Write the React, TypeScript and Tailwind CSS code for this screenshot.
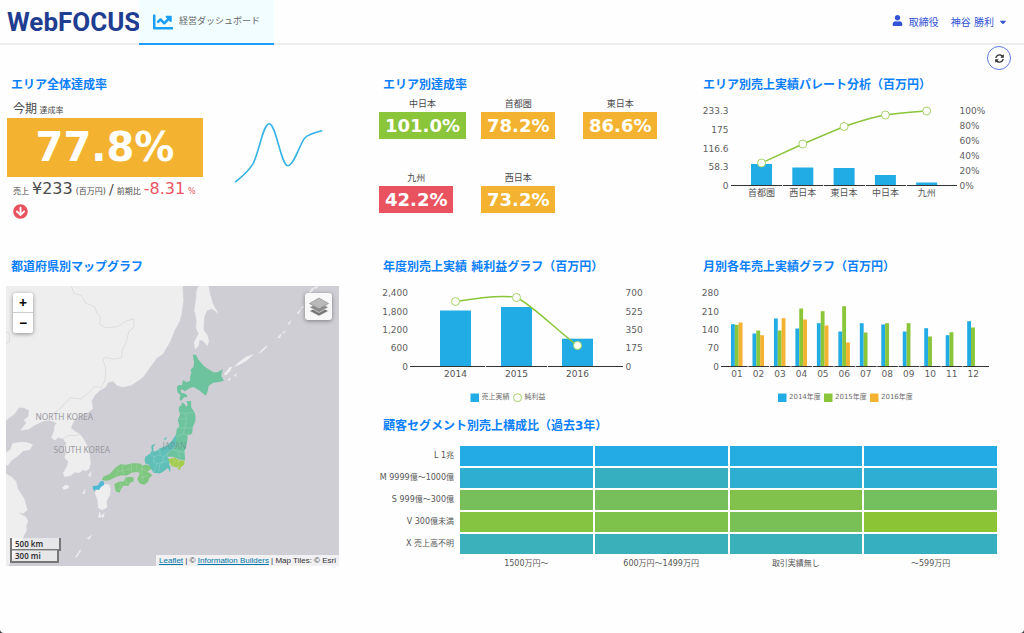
import React from "react";
import { FaArrowCircleDown, FaCaretDown, FaChartLine, FaSyncAlt, FaUser } from "react-icons/fa";

const BLUE = "#22ace5";
const GREEN = "#8bc53a";
const ORANGE = "#f3b331";

function Title({ children }: { children: React.ReactNode }) {
  return <h2 className="pl-[11px] text-xs leading-5 font-bold text-[#0b80fb]">{children}</h2>;
}

function Header() {
  return (
    <header className="flex h-[45px] items-start border-b-2 border-[#ededef]">
      <a href="#home" className="w-[139px] pl-[7px] font-[Roboto,sans-serif] text-[26px] leading-[44px] font-bold text-[#1f3d91]">
        WebFOCUS
      </a>
      <nav>
        <a
          href="#dashboard"
          className="flex h-[45px] w-[135px] items-center gap-[6px] border-b-2 border-[#1c9ff5] bg-[#f1fdff] pl-[14px] text-[9px] whitespace-nowrap text-[#666]"
        >
          <FaChartLine className="size-[20px] text-[#1c9ff9]" />
          経営ダッシュボード
        </a>
      </nav>
      <button type="button" className="mr-4 ml-auto flex h-[44px] items-center text-[10px] text-[#3353d4]">
        <FaUser className="mr-[6px] mb-1 size-[11px]" />
        <span>取締役</span>
        <span className="ml-3">神谷 勝利</span>
        <FaCaretDown className="ml-1 size-[10px]" />
      </button>
    </header>
  );
}

function AreaTotal() {
  return (
    <section>
      <Title>エリア全体達成率</Title>
      <div className="flex pl-[7px]">
        <div className="w-[196px] shrink-0">
          <p className="pt-[7px] pl-[6px] text-[8px] leading-[15px]">
            <span className="text-xs leading-[15px]">今期</span> 達成率
          </p>
          <p className="bg-[#f3b331] text-center text-[40px] leading-[59px] font-bold text-white">77.8%</p>
          <p className="flex items-baseline gap-[3px] pl-[6px] text-[8px] leading-6 whitespace-nowrap">
            <span>売上</span>
            <span className="text-base leading-6">¥233</span>
            <span>(百万円)</span>
            <span className="text-sm">/</span>
            <span>前期比</span>
            <span className="text-base leading-6 text-[#e9565f]">-8.31</span>
            <span className="text-[#e9565f]">%</span>
          </p>
          <FaArrowCircleDown className="ml-[6px] size-[15px] text-[#e9535f]" />
        </div>
        <svg viewBox="0 0 120 100" className="mt-[6px] ml-5 h-[100px] w-[120px]" fill="none">
          <path
            d="M12.7 80.7C19 75.5 25 71 30.3 62.3C37 48 40 23 46.3 22.7C53 23 58 64 64.7 64.7C71 65 77 42 82 36.7C85 33.500 90 32 98.700 29.700"
            stroke="#35b2e6"
            strokeWidth="1.600"
            strokeLinecap="round"
          />
        </svg>
      </div>
    </section>
  );
}

const areas = [
  { name: "中日本", value: "101.0%", tone: "bg-[#8bc53a]" },
  { name: "首都圏", value: "78.2%", tone: "bg-[#f3b331]" },
  { name: "東日本", value: "86.6%", tone: "bg-[#f3b331]" },
  { name: "九州", value: "42.2%", tone: "bg-[#e9535f]" },
  { name: "西日本", value: "73.2%", tone: "bg-[#f3b331]" },
];

function AreaRates() {
  return (
    <section>
      <Title>エリア別達成率</Title>
      <ul className="grid grid-cols-[repeat(3,102px)] gap-y-8 pt-[2px] pl-[7px]">
        {areas.map((a) => (
          <li key={a.name} className="w-max text-center">
            <p className="text-[9px] leading-[15px]">{a.name}</p>
            <p className={"px-[6px] text-lg leading-[27px] font-bold text-white " + a.tone}>{a.value}</p>
          </li>
        ))}
      </ul>
    </section>
  );
}

function Axis({ x1, x2, y, ticks }: { x1: number; x2: number; y: number; ticks: number[] }) {
  return (
    <g>
      <line x1={x1} x2={x2} y1={y} y2={y} stroke="#333" />
      {ticks.map((t) => (
        <rect key={t} x={t - 0.5} y={y - 1} width="1" height="2" fill="#fff" fillOpacity=".8" />
      ))}
    </g>
  );
}

function Labels({ x, anchor, items }: { x: number; anchor: "start" | "end"; items: [string, number][] }) {
  return (
    <g fontSize="9" fill="#5e5e5e" textAnchor={anchor}>
      {items.map(([t, y]) => (
        <text key={t} x={x} y={y + 3}>
          {t}
        </text>
      ))}
    </g>
  );
}

const pareto = [
  { name: "首都圏", bar: 21.5, line: 68 },
  { name: "西日本", bar: 18, line: 49 },
  { name: "東日本", bar: 17.5, line: 31.5 },
  { name: "中日本", bar: 10.5, line: 20 },
  { name: "九州", bar: 3, line: 16 },
];

function ParetoChart() {
  const cx = (i: number) => 69.5 + i * 41.3;
  return (
    <section>
      <Title>エリア別売上実績パレート分析（百万円）</Title>
      <svg viewBox="0 0 332 106" className="w-full" role="img" aria-label="エリア別売上実績パレート分析">
        <Labels x={36.5} anchor="end" items={[["233.3", 16], ["175", 35], ["116.6", 53.5], ["58.3", 72], ["0", 90.5]]} />
        <Labels x={267.5} anchor="start" items={[["100%", 16], ["80%", 30.5], ["60%", 46], ["40%", 61], ["20%", 76], ["0%", 90.5]]} />
        {pareto.map((p, i) => (
          <rect key={p.name} x={cx(i) - 10.5} y={90.5 - p.bar} width="21" height={p.bar} fill={BLUE} />
        ))}
        <Axis x1={39} x2={265} y={90.5} ticks={[90.5, 131.5, 173.5, 214.5]} />
        <path d="M69.5 68L110.800 49L152.100 31.500C166 27 180 22 193.400 20C207 18 221 17 234.700 16" fill="none" stroke={GREEN} strokeWidth="1.500" />
        {pareto.map((p, i) => (
          <g key={p.name}>
            <circle cx={cx(i)} cy={p.line} r="4" fill="#fff" stroke="#a5d267" />
            <text x={cx(i)} y="100.500" textAnchor="middle" fontSize="9" fill="#555">
              {p.name}
            </text>
          </g>
        ))}
      </svg>
    </section>
  );
}

const years = [
  { name: "2014", bar: 56, line: 24.5 },
  { name: "2015", bar: 59.5, line: 20.5 },
  { name: "2016", bar: 27.8, line: 68.5 },
];

function YearlyChart() {
  const cx = (i: number) => 83.5 + i * 61;
  return (
    <section>
      <Title>年度別売上実績 純利益グラフ（百万円）</Title>
      <svg viewBox="0 0 320 139" className="w-full" role="img" aria-label="年度別売上実績 純利益グラフ">
        <Labels x={36} anchor="end" items={[["2,400", 16], ["1,800", 34.5], ["1,200", 53], ["600", 71], ["0", 89.5]]} />
        <Labels x={253.5} anchor="start" items={[["700", 16], ["525", 34.5], ["350", 53], ["175", 71], ["0", 89.5]]} />
        {years.map((p, i) => (
          <rect key={p.name} x={cx(i) - 15.5} y={89.5 - p.bar} width="31" height={p.bar} fill={BLUE} />
        ))}
        <Axis x1={38} x2={251} y={89.5} ticks={[113.5, 175.5]} />
        <path d="M83.5 24.500C104 21 130 17.500 144.500 20.500C159 27 188 56 205.500 68.500" fill="none" stroke={GREEN} strokeWidth="1.500" />
        {years.map((p, i) => (
          <g key={p.name}>
            <circle cx={cx(i)} cy={p.line} r="4" fill="#fff" stroke="#a5d267" />
            <text x={cx(i)} y="99.500" textAnchor="middle" fontSize="9" fill="#555">
              {p.name}
            </text>
          </g>
        ))}
        <g fontSize="7" fill="#6b6b6b">
          <rect x="98.500" y="116.500" width="8.500" height="8.500" fill={BLUE} />
          <text x="109.500" y="122">売上実績</text>
          <circle cx="145.500" cy="120.700" r="4" fill="#fff" stroke="#a5d267" />
          <text x="152.500" y="122">純利益</text>
        </g>
      </svg>
    </section>
  );
}

const months: number[][] = [
  [42.3, 41.7, 44], [33, 36, 31.3], [48, 36, 48.3], [38, 58, 47], [43.3, 55.3, 41], [35, 60.3, 24],
  [43.3, 34], [42, 43.3], [35, 43.3], [38.3, 30], [31.3, 34.3], [45.3, 39],
];
const seriesColors = [BLUE, GREEN, ORANGE];

function MonthlyChart() {
  const cx = (i: number) => 45 + i * 21.47;
  return (
    <section>
      <Title>月別各年売上実績グラフ（百万円）</Title>
      <svg viewBox="0 0 332 139" className="w-full" role="img" aria-label="月別各年売上実績グラフ">
        <Labels x={27} anchor="end" items={[["280", 16], ["210", 34.5], ["140", 53], ["70", 71], ["0", 89.5]]} />
        {months.map((values, i) =>
          values.map((v, s) => (
            <rect key={i + "-" + s} x={cx(i) - 6 + s * 3.85} y={89.5 - v} width="3.850" height={v} fill={seriesColors[s]} />
          )),
        )}
        <Axis x1={29} x2={297} y={89.5} ticks={months.slice(1).map((_, i) => cx(i) + 11)} />
        {months.map((_, i) => (
          <text key={i} x={cx(i)} y="99.500" textAnchor="middle" fontSize="9" fill="#5e5e5e">
            {String(i + 1).padStart(2, "0")}
          </text>
        ))}
        <g fontSize="7" fill="#6b6b6b">
          {["2014年度", "2015年度", "2016年度"].map((t, i) => (
            <g key={t}>
              <rect x={86 + i * 46} y="116.500" width="8.500" height="8.500" fill={seriesColors[i]} />
              <text x={97 + i * 46} y="122">{t}</text>
            </g>
          ))}
        </g>
      </svg>
    </section>
  );
}

function MapCard() {
  const zoomButton = "flex size-5 items-center justify-center bg-white text-sm leading-none font-bold text-black";
  return (
    <section className="row-span-2">
      <Title>都道府県別マップグラフ</Title>
      <div className="relative mt-[9px] mr-[33px] ml-[6px] font-['Noto_Sans',sans-serif]">
        <svg viewBox="18 16 1002 844" className="w-full" role="img" aria-label="都道府県別マップ">
          <rect x="18" y="16" width="1002" height="844" fill="#cfced4" />
          <g fill="#eeeeef" stroke="#f6f6f7" strokeWidth="1">
            <path d="M18 16H549L551 60L546 100L540 122L525 150L512 182L490 220L472 232L450 262L430 290L412 303L395 314L370 320L352 315L340 302L325 306L318 320L300 330L285 345L275 362L279 385L262 398L245 402L232 414L222 422L213 443L228 455L240 462L250 475L264 500L270 530L272 550L268 566L258 572L250 569L238 578L225 576L213 586L195 590L190 580L202 558L206 545L195 533L198 520L192 505L200 490L190 475L175 472L165 480L155 472L163 452L165 435L172 428L150 420L130 422L105 434L85 447L62 450L80 428L72 420L86 408L88 390L72 382L58 381L42 402L18 420Z" />
            <path d="M18 518L32 508L38 490L60 486L80 487L98 493L90 508L70 512L52 528L35 540L24 555L18 556Z" />
            <path d="M18 582L34 590L48 604L54 628L72 655L82 690L70 700L52 697L78 712L84 724L78 738L80 750L70 770L62 795L48 812L42 828L24 860H18Z" />
            <path d="M597 16H627L632 42L641 72L656 98L638 84L622 90L614 110L612 148L624 165L628 182L624 195L610 180L600 178L597 196L588 206L584 186L598 160L590 142L592 118L585 90L590 58L592 30Z" />
            <path d="M302 624L314 612L328 614L332 628L330 646L320 664L322 682L308 690L296 684L294 660L286 640L290 630Z" />
            <path d="M188 622L198 615L208 618L204 625L192 628ZM266 585L274 575L272 590ZM248 640L256 628L254 642ZM296 712L300 696L304 712ZM304 708L314 700L310 714ZM262 775L276 766L268 778ZM226 832L240 812L244 810L232 830ZM674 282L690 262L698 260L692 272L680 284ZM706 258L716 248L740 230L762 222L742 240L722 252ZM778 218L800 197L804 198L790 212ZM834 172L846 160L842 172ZM850 156L860 150L854 158ZM866 130L876 120L870 132ZM894 98L904 86L898 100ZM905 84L912 76L914 80ZM930 34L940 22L944 26L934 38ZM944 22L954 16H958L950 24ZM686 298L694 292L690 300ZM704 286L712 280L708 288Z" />
          </g>
          <g fill="none" stroke="#d3d3d5" strokeWidth="2">
            <path d="M215 16L222 38L245 45L258 68L285 78L292 98L302 108L300 130L318 142L355 138L378 122L402 115L404 138L388 152L380 185L368 208L366 232L340 236L316 230L310 240L318 262L316 300L304 322L285 318L265 340L242 356L212 352L195 370L182 384L160 400" />
            <path d="M190 475L205 466L228 466L240 462" />
            <path d="M18 155L28 158V184L18 188" />
          </g>
          <g transform="translate(240 180)">
            <path fill="#6dc39e" d="M340 42L350 44L357 58L375 78L390 88L405 96L416 95L431 86L427 98L426 108L434 120L424 124L402 127L388 136L385 152L379 166L362 152L342 140L330 144L316 153L306 146L303 156L320 162L325 170L314 171L304 182L300 176L303 164L294 156L292 140L298 134L308 134L310 119L322 126L332 120L332 108L336 97L333 88L342 80L344 66Z" />
            <path fill="#6dc39e" d="M298 200L306 195L307 186L316 192L320 199L325 194L321 182L335 183L335 200L345 216L348 226L348 242L340 260L338 280L330 284L325 283L324 298L320 322L315 332L317 360L300 358L280 350L262 350L265 338L280 328L290 315L289 288L292 265L300 258L295 240L302 222L298 212Z" />
            <path fill="#60bfb9" d="M290 283L290 315L280 328L264 338L263 350L273 362L268 372L273 380L272 398L265 384L252 394L240 400L222 398L214 386L208 374L198 370L195 362L197 350L212 340L217 330L215 318L220 313L228 312L221 320L222 335L234 331L240 324L260 318L275 305ZM254 296L261 289L260 297L256 300Z" />
            <path fill="#a3cd4e" d="M266 358L284 352L300 360L316 362L314 374L306 380L300 390L294 386L300 376L292 382L276 378L272 370Z" />
            <path fill="#7fc680" d="M66 420L72 409L90 402L108 382L122 372L140 374L158 369L182 370L188 376L200 373L211 378L216 386L204 394L218 405L208 416L206 425L194 434L180 430L173 416L180 402L176 396L158 397L142 406L122 406L105 412L90 420L80 422Z" />
            <path fill="#7fc680" d="M104 432L120 424L132 424L138 412L152 410L162 412L162 424L152 428L146 438L132 436L124 446L120 458L108 454Z" />
            <path fill="#4fb9d3" d="M39 438L54 436L62 424L71 423L74 434L64 440L58 450L47 448L44 454L39 445Z" />
            <path
              fill="none"
              stroke="#dfe9e4"
              strokeOpacity=".4"
              strokeWidth="1.500"
              d="M298 215L316 220L342 216M318 220L322 236L316 262L338 264M300 236H320M292 265L316 262L312 282L325 284M290 290L312 282M290 318L306 316L322 312M280 328L298 334L316 336M298 334L300 352M264 342L252 350L250 366L240 374L238 394M212 342L224 350L222 366L234 370L226 384L224 396M240 326L242 344L252 350M222 350L242 344M250 366L268 362M234 370L250 366M280 354L286 364L278 378M286 364H302M300 360L294 374M110 384L116 394L108 410M130 374L128 392L134 404M116 394L156 386M156 370V396M172 370L170 386L182 398M182 386L198 390L206 400M188 376L186 398L192 418M182 412L204 408M120 426L126 436L114 450M138 416L140 430L150 428"
            />
          </g>
          <g fontSize="25" fill="#98989c">
            <text x="107" y="418">NORTH KOREA</text>
            <text x="161" y="518">SOUTH KOREA</text>
            <text x="489" y="506" fill="#62908f" fillOpacity=".75">JAPAN</text>
          </g>
        </svg>
        <div className="absolute top-[7px] left-[7px] divide-y divide-[#ccc] overflow-hidden rounded-[3px] shadow-[0_1px_4px_rgba(0,0,0,0.4)]">
          <button type="button" aria-label="拡大" className={zoomButton}>+</button>
          <button type="button" aria-label="縮小" className={zoomButton}>−</button>
        </div>
        <button
          type="button"
          aria-label="レイヤー"
          className="absolute top-[7px] right-[7px] flex size-[27px] items-center justify-center rounded-[3px] bg-[#f8f8f8] shadow-[0_1px_4px_rgba(0,0,0,0.4)]"
        >
          <svg viewBox="0 0 20 20" className="size-5" strokeWidth=".600">
            <path d="M10 9L19.500 14L10 19L.5 14Z" fill="#747474" stroke="#f4f4f4" />
            <path d="M10 5L19.500 10.300L10 15.600L.5 10.300Z" fill="#8d8d8d" stroke="#f4f4f4" />
            <path d="M10 1L19.500 6.500L10 12L.5 6.500Z" fill="#b9b9b9" stroke="#858585" />
          </svg>
        </button>
        <div className="absolute bottom-[3px] left-1 text-[8px] leading-[11px] font-semibold text-[#333]">
          <p className="w-[51px] border-2 border-t-0 border-[#777] bg-white/50 pl-[3px]">500 km</p>
          <p className="-mt-px w-[49px] border-2 border-t-0 border-[#777] bg-white/50 pl-[3px]">300 mi</p>
        </div>
        <p className="absolute right-0 bottom-0 bg-white/70 px-[3px] font-['Liberation_Sans',Arial,sans-serif] text-[8px] leading-[11px] whitespace-nowrap text-[#333]">
          <a href="#leaflet" className="text-[#0078a8] underline">Leaflet</a> | ©{" "}
          <a href="#builders" className="text-[#0078a8] underline">Information Builders</a> | Map Tiles: © Esri
        </p>
      </div>
    </section>
  );
}

const segments = [
  { name: "L 1兆", cells: ["bg-[#22abe5]", "bg-[#22abe5]", "bg-[#25ade1]", "bg-[#22abe5]"] },
  { name: "M 9999億～1000億", cells: ["bg-[#2eaed0]", "bg-[#36b0c0]", "bg-[#2eaed0]", "bg-[#2eaed2]"] },
  { name: "S 999億～300億", cells: ["bg-[#76bf5b]", "bg-[#76bf5b]", "bg-[#80c24b]", "bg-[#74bf5e]"] },
  { name: "V 300億未満", cells: ["bg-[#85c440]", "bg-[#7ec24c]", "bg-[#79c056]", "bg-[#8bc536]"] },
  { name: "X 売上高不明", cells: ["bg-[#3ab1bb]", "bg-[#3ab1ba]", "bg-[#3ab1ba]", "bg-[#36b0c1]"] },
];

function SegmentTable() {
  return (
    <section className="col-span-2">
      <Title>顧客セグメント別売上構成比（過去3年）</Title>
      <div className="pt-2 pr-[25px]">
        <table className="w-full table-fixed border-collapse text-[8px] text-[#555]">
          <colgroup>
            <col className="w-[87px]" />
            <col />
            <col />
            <col />
            <col />
          </colgroup>
          <tbody>
            {segments.map((s) => (
              <tr key={s.name} className="h-[22px]">
                <th scope="row" className="pr-1 text-right font-normal whitespace-nowrap">{s.name}</th>
                {s.cells.map((c, i) => (
                  <td key={i} className={"border-2 border-white bg-clip-padding " + c} />
                ))}
              </tr>
            ))}
          </tbody>
          <tfoot>
            <tr className="h-4">
              <td />
              {["1500万円～", "600万円～1499万円", "取引実績無し", "～599万円"].map((t) => (
                <th key={t} scope="col" className="text-center font-normal">{t}</th>
              ))}
            </tr>
          </tfoot>
        </table>
      </div>
    </section>
  );
}

export default function App() {
  return (
    <div className="min-h-screen bg-[#33363b]">
      <div className="min-h-screen rounded-b-[4px] bg-[#fefefe] font-['DejaVu_Sans','Noto_Sans_CJK_JP',sans-serif] text-[#4a4a4a]">
        <Header />
        <div className="flex justify-end pt-px pr-[13px]">
          <button
            type="button"
            aria-label="更新"
            className="flex size-6 items-center justify-center rounded-full border border-[#5b78e6] bg-white text-[#333]"
          >
            <FaSyncAlt className="size-[9px]" />
          </button>
        </div>
        <main className="grid grid-cols-[93fr_80fr_83fr] grid-rows-[182px_auto_auto] pt-[5px]">
          <AreaTotal />
          <AreaRates />
          <ParetoChart />
          <MapCard />
          <YearlyChart />
          <MonthlyChart />
          <SegmentTable />
        </main>
      </div>
    </div>
  );
}
